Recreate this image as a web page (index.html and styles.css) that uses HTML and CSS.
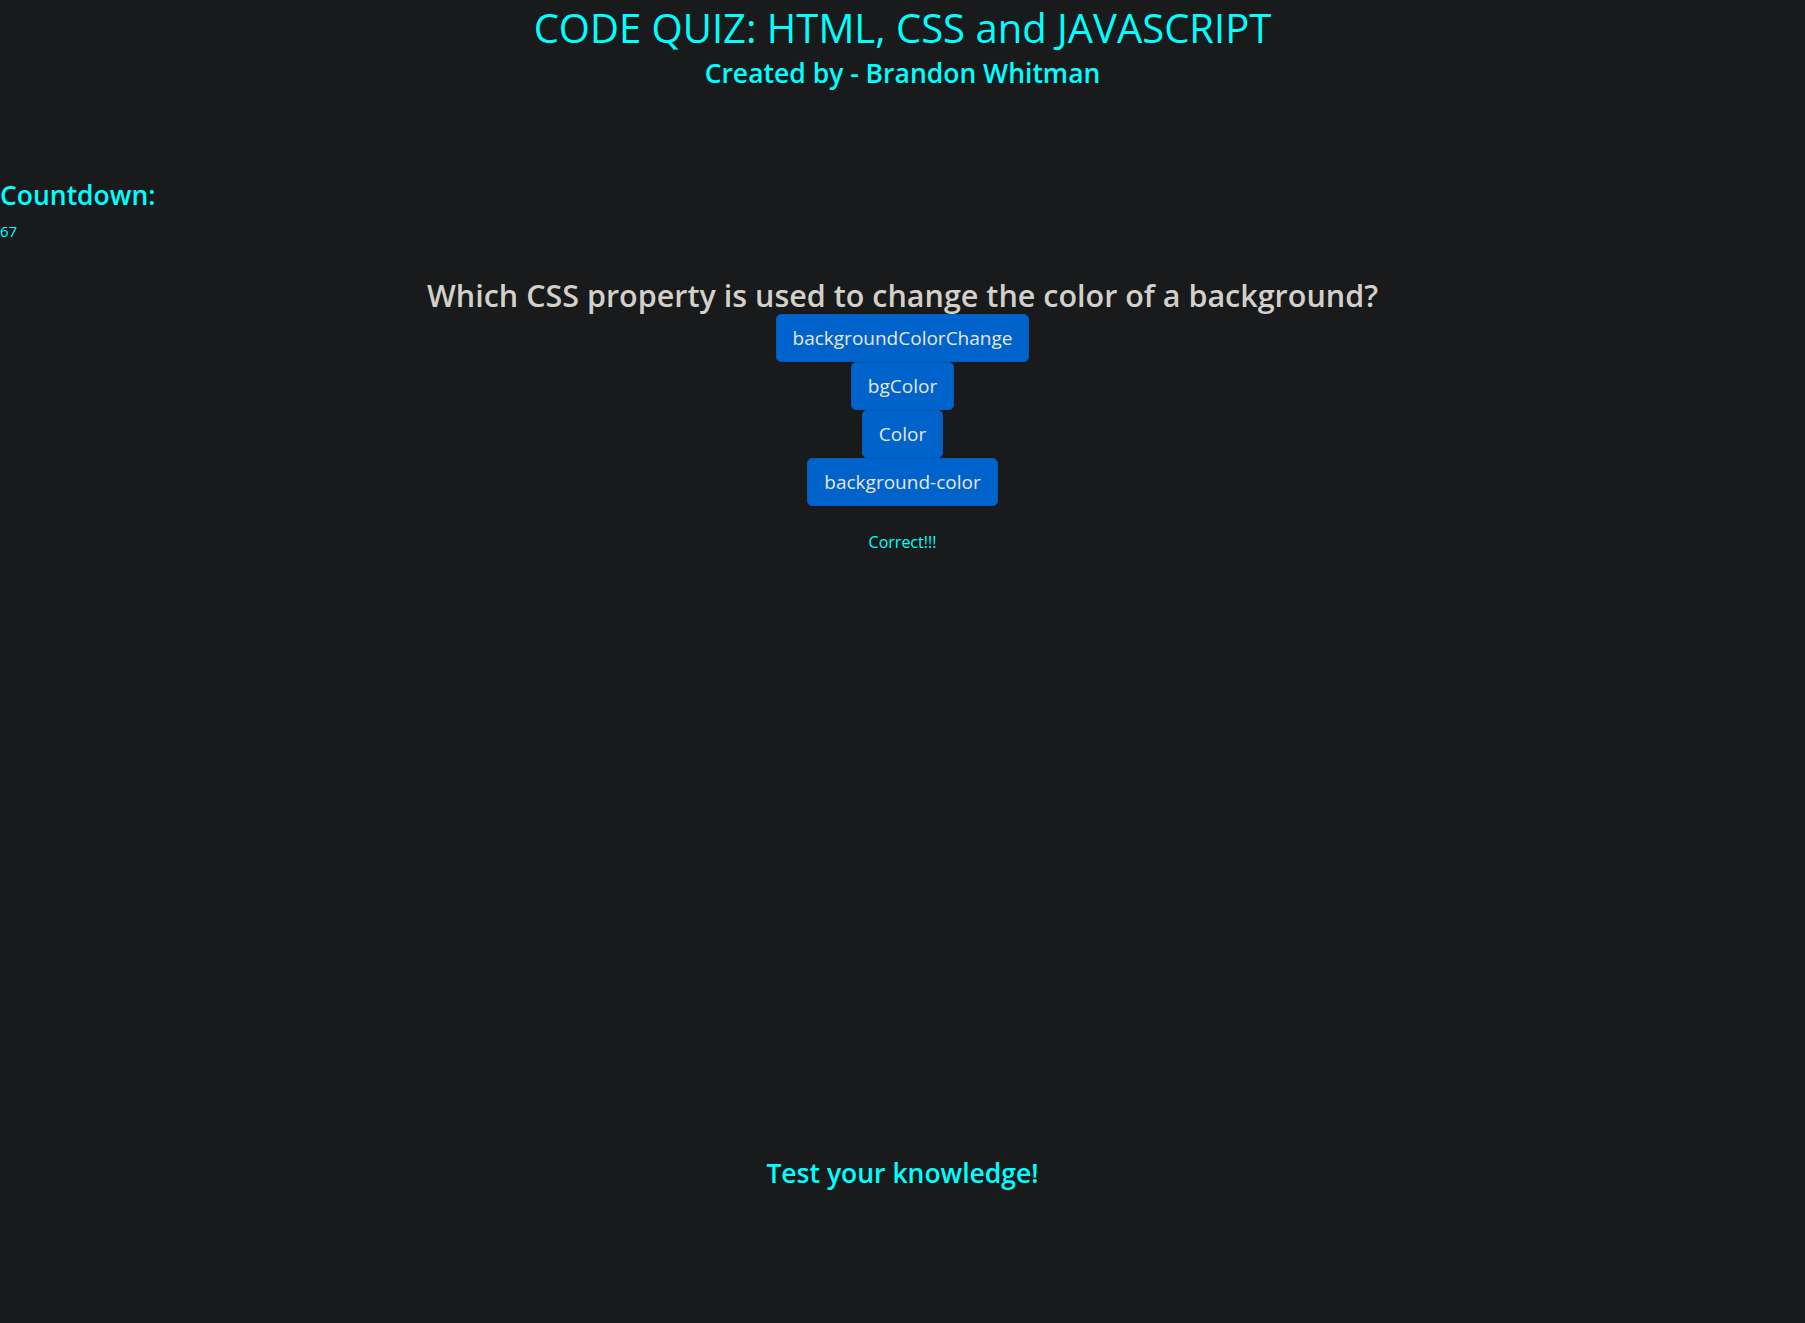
FILE: index.html
```html
<!DOCTYPE html>
<html lang="en">
<head>
<meta charset="utf-8">
<title>Code Quiz</title>
<link rel="stylesheet" href="styles.css">
</head>
<body>
<header class="header">
  <h1 class="title">CODE QUIZ: HTML, CSS and JAVASCRIPT</h1>
  <h3 class="subtitle">Created by - Brandon Whitman</h3>
</header>
<section class="timer">
  <h3 class="timer-label">Countdown:</h3>
  <p class="timer-value">67</p>
</section>
<main class="quiz">
  <h2 class="question">Which CSS property is used to change the color of a background?</h2>
  <div class="choices">
    <button class="choice">backgroundColorChange</button>
    <button class="choice">bgColor</button>
    <button class="choice">Color</button>
    <button class="choice">background-color</button>
  </div>
  <p class="feedback">Correct!!!</p>
</main>
<footer class="footer">
  <h3 class="tagline">Test your knowledge!</h3>
</footer>
</body>
</html>
```
FILE: styles.css
```css
html, body {
  margin: 0;
  padding: 0;
}
body {
  background: #181a1b;
  color: #00ffff;
  font-family: "Open Sans", "Noto Sans", sans-serif;
  font-size: 15px;
  line-height: 1.5;
  min-height: 1323px;
}
.header {
  text-align: center;
}
.title {
  margin: 0;
  font-size: 40px;
  font-weight: 400;
  line-height: 55px;
  color: #00ffff;
}
.subtitle {
  margin: 1px 0 0;
  font-size: 26.5px;
  font-weight: 600;
  line-height: 34px;
  color: #00ffff;
}
.timer {
  margin-top: 88px;
}
.timer-label {
  margin: 0;
  font-size: 26.5px;
  font-weight: 600;
  line-height: 34px;
}
.timer-value {
  margin: 7px 0 0;
  font-size: 15px;
  line-height: 24px;
}
.quiz {
  margin-top: 34px;
  display: flex;
  flex-direction: column;
  align-items: center;
}
.question {
  margin: 0;
  font-size: 30.5px;
  font-weight: 600;
  line-height: 36px;
  color: #d3cfc9;
  text-align: center;
}
.choices {
  margin-top: 1px;
  display: flex;
  flex-direction: column;
  align-items: center;
}
.choice {
  font-family: inherit;
  font-size: 19px;
  line-height: 30px;
  padding: 8px 16px;
  color: #e8e6e3;
  background: #0063cc;
  border: 1px solid #005cbd;
  border-radius: 5px;
  height: 48px;
}
.feedback {
  margin: 24px 0 0;
  font-size: 16px;
  line-height: 24px;
}
.footer {
  margin-top: 602px;
  text-align: center;
}
.tagline {
  margin: 0;
  font-size: 26.5px;
  font-weight: 600;
  line-height: 34px;
}
```
